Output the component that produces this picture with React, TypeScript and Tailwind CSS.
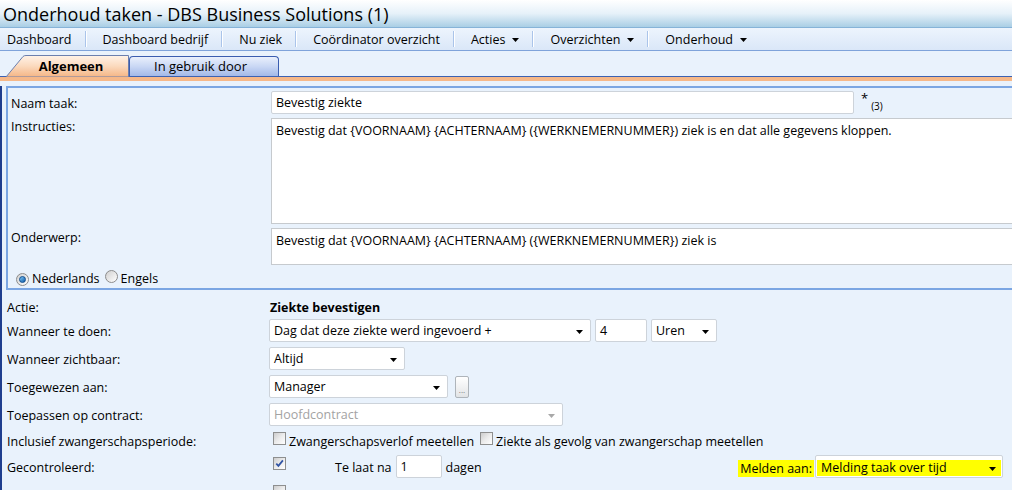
import React from 'react';

function Arrow({ color = '#000' }: { color?: string }) {
  return (
    <svg width="7" height="4" viewBox="0 0 7 4" className="shrink-0">
      <path d="M0 0h7L3.5 4z" fill={color} />
    </svg>
  );
}

function Checkbox({ checked }: { checked?: boolean }) {
  return (
    <span className="relative inline-flex h-[13px] w-[13px] shrink-0 items-center justify-center border border-[#8e8f8f] bg-gradient-to-br from-[#cdcdcd] via-[#ececec] to-white">
      {checked && (
        <svg width="9" height="9" viewBox="0 0 9 9" className="absolute">
          <path d="M1.3 4.6l2.1 2.3L7.9 1.4" stroke="#3154a4" strokeWidth="1.7" fill="none" />
        </svg>
      )}
    </span>
  );
}

function Radio({ checked }: { checked?: boolean }) {
  return (
    <span className="inline-flex h-[13px] w-[13px] shrink-0 items-center justify-center rounded-full border border-[#8c8c8c] bg-gradient-to-br from-[#d0d0d0] to-white">
      {checked && (
        <span className="h-[7px] w-[7px] rounded-full border border-[#0d4c8e] bg-gradient-to-br from-[#7cc8f4] to-[#0b5aa8]" />
      )}
    </span>
  );
}

function Select({
  value,
  className = '',
  disabled,
}: {
  value: string;
  className?: string;
  disabled?: boolean;
}) {
  return (
    <div
      className={`flex h-[23px] items-center justify-between rounded-[2px] border border-[#cdd3da] bg-white pl-[4px] pr-[7px] pt-[2px] ${className}`}
    >
      <span className={disabled ? 'text-[#a3a3a3]' : ''}>{value}</span>
      <Arrow color={disabled ? '#a8a8a8' : '#000'} />
    </div>
  );
}

const menuItems = [
  { name: 'Dashboard' },
  { name: 'Dashboard bedrijf' },
  { name: 'Nu ziek' },
  { name: 'Coördinator overzicht' },
  { name: 'Acties', dropdown: true },
  { name: 'Overzichten', dropdown: true },
  { name: 'Onderhoud', dropdown: true },
];

function FormRow({
  label,
  className = '',
  children,
}: {
  label: string;
  className?: string;
  children?: React.ReactNode;
}) {
  return (
    <div className={`flex items-center ${className}`}>
      <div className="w-[262px] shrink-0 whitespace-nowrap pt-[3px]">{label}</div>
      {children}
    </div>
  );
}

export default function App() {
  return (
    <div className="h-[490px] w-[1012px] overflow-hidden bg-[#e9f2fc] font-['Open_Sans',sans-serif] text-[12.5px] text-black">
      {/* Title */}
      <div className="flex h-[28px] items-center border-b border-[#86b3d8] bg-gradient-to-b from-white via-[#e6f1f9] to-[#a9cee5] pl-[3px] text-[18px] leading-none">
        Onderhoud taken - DBS Business Solutions (1)
      </div>

      {/* Menu */}
      <div className="flex h-[23px] items-center border-b border-[#7fa3da] bg-gradient-to-b from-[#edf4fd] to-[#dae7f8]">
        {menuItems.map((item, i) => (
          <React.Fragment key={item.name}>
            {i > 0 && (
              <span className="flex h-[16px] w-[2px]">
                <span className="w-px bg-[#aac4ea]" />
                <span className="w-px bg-white" />
              </span>
            )}
            <div className={`flex items-center gap-[7px] pt-[2px] ${i === 0 ? 'pl-[7px]' : 'pl-[16px]'} pr-[13px]`}>
              {item.name}
              {item.dropdown && <Arrow />}
            </div>
          </React.Fragment>
        ))}
      </div>

      {/* Tabs */}
      <div className="flex h-[26px] items-end border-b border-[#3d62b2] pl-[6px]">
        <div className="relative z-10 -mb-px flex h-[22px] w-[123px] items-center justify-center pl-[7px] pt-[1px] text-[13px] font-bold">
          <svg width="123" height="22" viewBox="0 0 123 22" className="absolute inset-0">
            <defs>
              <linearGradient id="tabOrange" x1="0" y1="0" x2="0" y2="1">
                <stop offset="0" stopColor="#fff3e8" />
                <stop offset="0.5" stopColor="#fbd9bd" />
                <stop offset="1" stopColor="#f5b584" />
              </linearGradient>
            </defs>
            <path
              d="M0 22L17 1.5Q18 0.5 20 0.5H122.5V22Z"
              fill="url(#tabOrange)"
              stroke="#6b7fae"
              strokeWidth="1"
            />
          </svg>
          <span className="relative">Algemeen</span>
        </div>
        <div className="flex h-[20px] w-[150px] items-center rounded-t-[4px] border border-b-0 border-[#3b5db0] bg-gradient-to-b from-[#eaf0fc] via-[#c9d7f4] to-[#a3b9e8] pl-[24px] pt-[1px] text-[13px]">
          In gebruik door
        </div>
      </div>
      <div className="h-[4px] bg-[#f6b889]" />

      {/* Body */}
      <div className="h-[420px] border-l-2 border-[#1f3e8e]">
        {/* Language panel */}
        <div className="ml-[4px] mt-[5px] w-[1030px] border-y-2 border-l-2 border-[#7ba6e3] pt-[3px]">
          <div className="flex h-[23px] items-start">
            <div className="flex h-[23px] w-[263px] shrink-0 items-center pl-[3px] pt-[3px]">Naam taak:</div>
            <div className="flex h-[23px] w-[583px] items-center rounded-[2px] border border-[#cdd3da] bg-white pl-[4px] pt-[2px]">
              Bevestig ziekte
            </div>
            <span className="ml-[7px] mt-[1px] text-[13px] leading-none">*</span>
            <span className="ml-[3px] mt-[10px] text-[10px] leading-none">(3)</span>
          </div>

          <div className="mt-[4px] flex">
            <div className="w-[263px] shrink-0 pl-[3px]">Instructies:</div>
            <div className="h-[106px] flex-1 border border-[#c6cace] bg-white pl-[4px] pt-[3px]">
              Bevestig dat {'{VOORNAAM}'} {'{ACHTERNAAM}'} ({'{WERKNEMERNUMMER}'}) ziek is en dat alle gegevens kloppen.
            </div>
          </div>

          <div className="mt-[4px] flex">
            <div className="w-[263px] shrink-0 pl-[3px] pt-[1px]">Onderwerp:</div>
            <div className="h-[37px] flex-1 border border-[#c6cace] bg-white pl-[4px] pt-[3px]">
              Bevestig dat {'{VOORNAAM}'} {'{ACHTERNAAM}'} ({'{WERKNEMERNUMMER}'}) ziek is
            </div>
          </div>

          <div className="mt-[5px] flex h-[18px] items-center pl-[8px]">
            <Radio checked />
            <span className="ml-[3px]">Nederlands</span>
            <span className="ml-[5px]">
              <Radio />
            </span>
            <span className="ml-[3px]">Engels</span>
          </div>
        </div>

        {/* Settings */}
        <div className="flex flex-col pl-[5px] pt-[5px]">
          <FormRow label="Actie:" className="h-[24px]">
            <span className="pl-[1px] pt-[3px] font-bold">Ziekte bevestigen</span>
          </FormRow>

          <FormRow label="Wanneer te doen:" className="h-[23px]">
            <Select value="Dag dat deze ziekte werd ingevoerd +" className="w-[322px]" />
            <div className="ml-[4px] flex h-[23px] w-[52px] items-center rounded-[2px] border border-[#cdd3da] bg-white pl-[4px] pt-[2px]">
              4
            </div>
            <Select value="Uren" className="ml-[4px] w-[66px]" />
          </FormRow>

          <FormRow label="Wanneer zichtbaar:" className="mt-[5px] h-[23px]">
            <Select value="Altijd" className="w-[136px]" />
          </FormRow>

          <FormRow label="Toegewezen aan:" className="mt-[5px] h-[23px]">
            <Select value="Manager" className="w-[179px]" />
            <div className="ml-[7px] flex h-[22px] w-[14px] items-end justify-center rounded-[2px] border border-[#aeb4ba] bg-gradient-to-b from-white to-[#e2e4e6] pb-[3px] text-[8px] leading-none text-[#777]">
              ...
            </div>
          </FormRow>

          <FormRow label="Toepassen op contract:" className="mt-[5px] h-[23px]">
            <Select value="Hoofdcontract" className="w-[294px]" disabled />
          </FormRow>

          <FormRow label="Inclusief zwangerschapsperiode:" className="mt-[4px] h-[22px]">
            <span className="ml-[4px]">
              <Checkbox />
            </span>
            <span className="ml-[3px] pt-[3px]">Zwangerschapsverlof meetellen</span>
            <span className="ml-[6px]">
              <Checkbox />
            </span>
            <span className="ml-[3px] pt-[3px]">Ziekte als gevolg van zwangerschap meetellen</span>
          </FormRow>

          <FormRow label="Gecontroleerd:" className="mt-[3px] h-[23px]">
            <span className="ml-[4px]">
              <Checkbox checked />
            </span>
            <span className="ml-[49px] pt-[3px]">Te laat na</span>
            <div className="ml-[4px] flex h-[23px] w-[46px] items-center rounded-[2px] border border-[#cdd3da] bg-white pl-[4px] pt-[2px]">
              1
            </div>
            <span className="ml-[4px] pt-[3px]">dagen</span>
            <div className="ml-auto mr-[9px] flex h-[23px] items-end">
              <span className="mb-px flex h-[17px] items-center bg-[#ffff00] px-[2px] pt-[1px]">Melden aan:</span>
              <div className="ml-[1px] flex h-[23px] w-[188px] items-end rounded-[2px] border border-[#cdd3da] bg-white px-[1px] pb-px">
                <div className="flex h-[16px] w-full items-center justify-between bg-[#ffff00] pl-[4px] pr-[5px] pt-[1px]">
                  <span>Melding taak over tijd</span>
                  <Arrow />
                </div>
              </div>
            </div>
          </FormRow>

          <FormRow label="Automatisch afsluiten:" className="mt-[5px] h-[23px]">
            <span className="ml-[4px]">
              <Checkbox />
            </span>
          </FormRow>
        </div>
      </div>
    </div>
  );
}
